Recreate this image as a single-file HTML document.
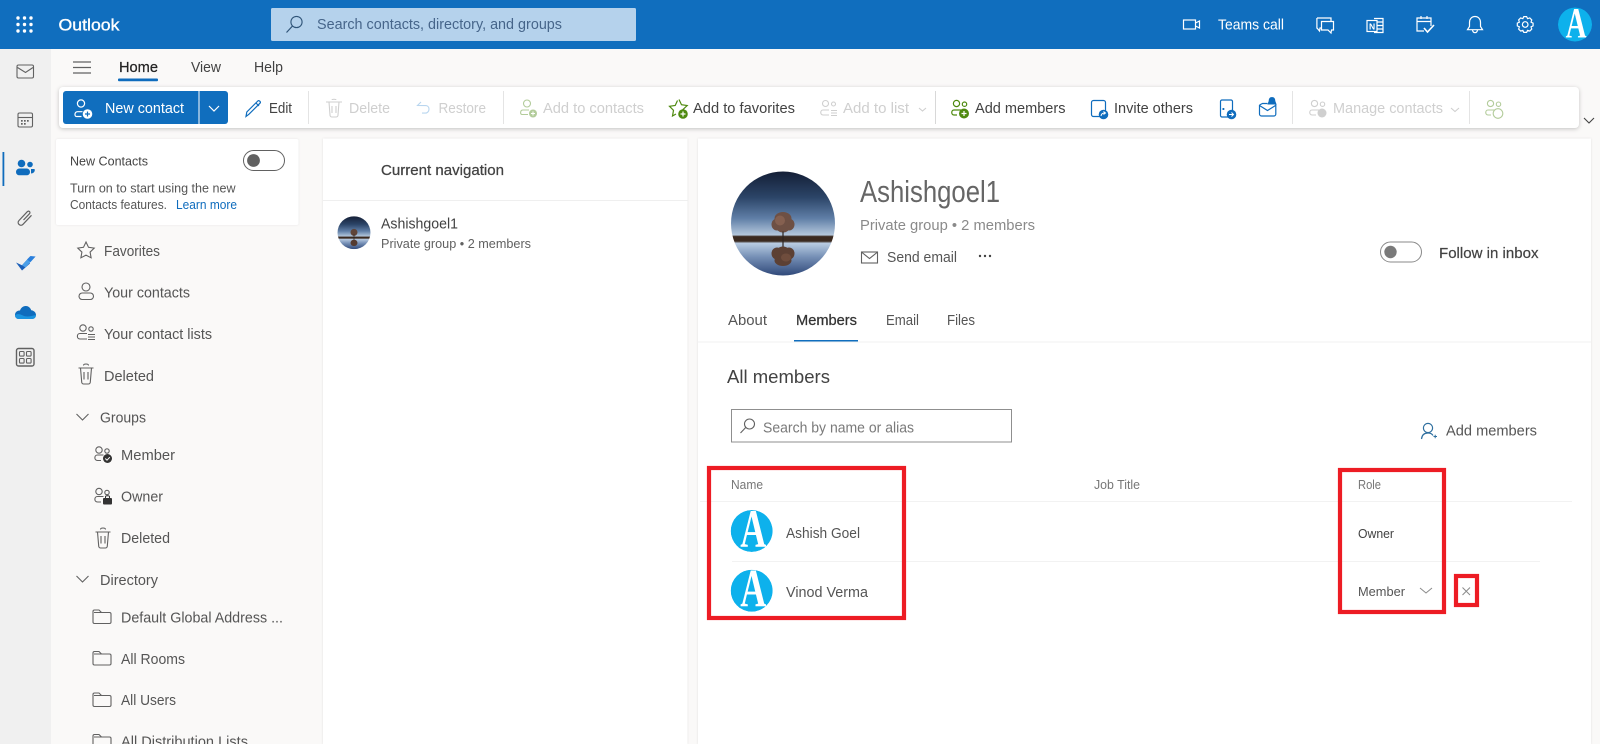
<!DOCTYPE html>
<html lang="en"><head><meta charset="utf-8"><title>Outlook</title>
<style>
html,body{margin:0;padding:0;width:1600px;height:744px;overflow:hidden;background:#faf9f8}
svg{display:block;filter:blur(.3px)}
text{font-family:"Liberation Sans",sans-serif;font-size:14px;fill:#424242}
.w{fill:#fff}.d{fill:#cfcfcf}.g{fill:#616161}.s{font-size:12.5px}.b{font-weight:bold}
.l{fill:none;stroke:#616161;stroke-width:1.1}
.wl{fill:none;stroke:#fff;stroke-width:1.2}
.bl{fill:none;stroke:#0f6cbd;stroke-width:1.2}
.gl{fill:none;stroke:#4f8a10;stroke-width:1.2}
.lg{fill:none;stroke:#b3cc9b;stroke-width:1.1}
.dl{fill:none;stroke:#cfcfcf;stroke-width:1.1}
</style></head><body>
<svg width="1600" height="744" viewBox="0 0 1600 744" xmlns="http://www.w3.org/2000/svg">
<defs>
<linearGradient id="sky" x1="0" y1="0" x2="0" y2="1">
<stop offset="0" stop-color="#141f36"/><stop offset=".25" stop-color="#2c4568"/><stop offset=".45" stop-color="#5f7ea6"/><stop offset=".61" stop-color="#b4c7dc"/><stop offset=".625" stop-color="#3b2a20"/><stop offset=".67" stop-color="#3b2a20"/><stop offset=".69" stop-color="#b9cce2"/><stop offset=".82" stop-color="#7690b6"/><stop offset="1" stop-color="#30497a"/>
</linearGradient>
<clipPath id="c52"><circle cx="0" cy="0" r="52"/></clipPath>
<clipPath id="c21"><circle cx="0" cy="0" r="21"/></clipPath>
</defs>

<!-- backgrounds -->
<rect width="1600" height="744" fill="#faf9f8"/>
<rect y="49" width="51" height="695" fill="#f0f0f0"/>
<rect width="1600" height="49" fill="#106ebe"/>

<!-- header -->
<g fill="#fff"><circle cx="18" cy="18" r="1.7"/><circle cx="24.5" cy="18" r="1.7"/><circle cx="31" cy="18" r="1.7"/><circle cx="18" cy="24.5" r="1.7"/><circle cx="24.5" cy="24.5" r="1.7"/><circle cx="31" cy="24.5" r="1.7"/><circle cx="18" cy="31" r="1.7"/><circle cx="24.5" cy="31" r="1.7"/><circle cx="31" cy="31" r="1.7"/></g>
<text x="58.5" y="30.7" textLength="61" lengthAdjust="spacingAndGlyphs" class="w" style="font-size:17px;stroke:#fff;stroke-width:.35">Outlook</text>
<rect x="271" y="8" width="365" height="33" rx="1.5" fill="#b5d2ec"/>
<circle cx="296.5" cy="22" r="5.6" fill="none" stroke="#2f5478" stroke-width="1.1"/><path d="M292.5 26 286.5 32.5" fill="none" stroke="#2f5478" stroke-width="1.2"/>
<text x="317" y="29" textLength="245" lengthAdjust="spacingAndGlyphs" style="font-size:15px;fill:#46658a">Search contacts, directory, and groups</text>
<rect x="1183.500" y="20" width="12" height="9" class="wl"/><path d="M1195.500 23l4-2v7l-4-2" class="wl"/>
<text x="1218" y="29.300" textLength="66" lengthAdjust="spacingAndGlyphs" class="w" style="font-size:14.500px">Teams call</text>
<path d="M1317 18h14v3M1322 28h-2l-.5 3-2.500-3h-.1V18" class="wl"/><path d="M1321.500 21.500h12v8.500h-2l-.5 3-3-3h-6.500z" class="wl"/>
<path d="M1374 18.500h9v14h-9M1377 22h6M1377 25.500h6M1377 29h6" class="wl"/><rect x="1367" y="20.500" width="10" height="11" class="wl"/><text x="1369" y="29.500" class="w b" style="font-size:8.500px">N</text>
<path d="M1431 26v-8h-14v13h7M1417 21.500h14M1421 16v3M1427 16v3" class="wl"/><path d="M1424 28l3.500 4 6.500-7" fill="none" stroke="#fff" stroke-width="1.600"/>
<path d="M1475 16.500c-3.500 0-5.500 2.600-5.500 6v4l-2 3.200h15l-2-3.200v-4c0-3.400-2-6-5.500-6zM1472.500 30c.3 1.800 1.200 2.700 2.500 2.700s2.200-.9 2.500-2.700" class="wl"/>
<g transform="translate(1525.200 24.500)"><polygon class="wl" points="7.880,-1.390 7.880,1.390 5.840,2.360 6.550,4.590 4.590,6.550 2.360,5.840 1.390,7.880 -1.390,7.880 -2.360,5.840 -4.590,6.550 -6.550,4.590 -5.840,2.360 -7.880,1.390 -7.880,-1.390 -5.840,-2.360 -6.550,-4.590 -4.590,-6.550 -2.360,-5.840 -1.390,-7.880 1.390,-7.880 2.360,-5.840 4.590,-6.550 6.550,-4.590 5.840,-2.360"/><circle r="2.800" class="wl"/></g>
<g transform="translate(1575 24.500) scale(.81)" clip-path="url(#c21)"><circle r="21" fill="#0db1ec"/><text x="-11.500" y="16" textLength="26" lengthAdjust="spacingAndGlyphs" class="w b" style="font-family:'Liberation Serif',serif;font-size:54px">A</text><rect x="-21" y="16" width="42" height="1.500" fill="#0db1ec"/></g>

<!-- rail -->
<rect x="17" y="65" width="16.500" height="13" rx="1.500" class="l"/><path d="M17.500 67.500l8 5 7.500-5" class="l"/>
<rect x="18" y="113" width="14.500" height="14" rx="1.500" class="l"/><path d="M18 117.500h14.500" class="l"/><g fill="#616161"><rect x="21" y="120" width="1.700" height="1.700"/><rect x="24" y="120" width="1.700" height="1.700"/><rect x="27" y="120" width="1.700" height="1.700"/><rect x="21" y="123" width="1.700" height="1.700"/><rect x="24" y="123" width="1.700" height="1.700"/></g>
<rect x="2.500" y="152" width="1.800" height="34" fill="#0f6cbd"/>
<g fill="#0f6cbd"><circle cx="21.500" cy="163.500" r="3.800"/><circle cx="30" cy="164.500" r="2.800"/><rect x="16" y="168.500" width="14" height="6.800" rx="3.300"/><path d="M31 169h3c.6 0 .8.400.8 1 0 2-1.600 3.500-3.800 3.500z"/></g>
<path d="M23.500 220l6-6.300c1.400-1.500-.7-3.500-2.200-2l-8.300 8.800c-2.600 2.800 1.400 6.500 4 3.800l8.500-9" class="l" style="stroke-width:1.200"/>
<path d="M16 262.500l6 2.800 5-5.500 3 3.700-8 7z" fill="#1b5fb8"/><path d="M22 265.300l8-8.800 5.500 0-10 11z" fill="#4b9fe8"/><path d="M27 259.500l3.500-3.500 5 .5-5 5.500z" fill="#2a7fdc"/>
<path d="M15 315c0-3 2.500-4.800 5-4.500 1-3 3.500-4.800 6-4.500 2.800.2 4.500 2 5.200 4.200 2.200.2 4.800 1.800 4.800 4.800 0 2.500-2 4-4 4H19c-2.500 0-4-1.500-4-4z" fill="#0f6cbd"/><path d="M15 315c3-1.500 5-1 8 .5 4 2 8 .5 13-.5 0 2.500-2 4-4 4H19c-2.500 0-4-1.500-4-4z" fill="#1b94e0"/>
<rect x="16.500" y="348.500" width="17.500" height="17.500" rx="2" fill="none" stroke="#616161" stroke-width="1.400"/><g><rect x="19.500" y="351.500" width="4.600" height="4.600" rx="1" class="l"/><rect x="26.500" y="351.500" width="4.600" height="4.600" rx="1" class="l"/><rect x="19.500" y="358.500" width="4.600" height="4.600" rx="1" class="l"/><rect x="26.500" y="358.500" width="4.600" height="4.600" rx="1" class="l"/></g>

<!-- tabs -->
<path d="M73 62h18M73 67.500h18M73 73h18" class="l" style="stroke-width:1.300"/>
<text x="119" y="72" textLength="39" lengthAdjust="spacingAndGlyphs" style="font-size:14.500px;stroke:#242424;stroke-width:.25;fill:#242424">Home</text>
<rect x="118" y="78.500" width="40" height="2.800" rx="1" fill="#0f6cbd"/>
<text x="191" y="72" textLength="30" lengthAdjust="spacingAndGlyphs" style="font-size:14.500px">View</text>
<text x="254" y="72" textLength="29" lengthAdjust="spacingAndGlyphs" style="font-size:14.500px">Help</text>

<!-- ribbon -->
<rect x="59" y="87" width="1520" height="41" rx="4" fill="#fff" style="filter:drop-shadow(0 1px 2px rgba(0,0,0,.22))"/>
<rect x="63" y="91" width="165" height="33" rx="3" fill="#106ebe"/>
<rect x="198.500" y="91" width="1" height="33" fill="#fff"/>
<circle cx="81" cy="103.500" r="3.600" class="wl"/><path d="M76.500 116.500c-2.200 0-2.200-4.500 1-4.800h5M76.500 116.500h5" class="wl"/><circle cx="87.500" cy="114" r="4.800" fill="#fff"/><path d="M85 114h5M87.500 111.500v5" stroke="#106ebe" stroke-width="1.200"/>
<text x="105" y="113" textLength="79" lengthAdjust="spacingAndGlyphs" class="w" style="font-size:14.500px">New contact</text>
<path d="M209 106l5 5 5-5" class="wl"/>
<path d="M246 116.500l.8-4.500 11-11c1.200-1.200 3.400 1 2.200 2.200l-11 11z" class="bl"/><path d="M256 103l3 3" class="bl"/>
<text x="269" y="113" textLength="23" lengthAdjust="spacingAndGlyphs" style="font-size:14.500px">Edit</text>
<rect x="308" y="91" width="1" height="33" fill="#e4e4e4"/>
<path d="M326 102h16M329 102l1 13c0 1 .7 2 2 2h4c1.300 0 2-1 2-2l1-13M332 100c0-1 4-1 4 0M332 106v7M336 106v7" class="dl"/>
<text x="349" y="113" textLength="41" lengthAdjust="spacingAndGlyphs" class="d" style="font-size:14.500px">Delete</text>
<path d="M421 102l-3.500 3.500 8 .1c2 0 3.500 1.400 3.500 3.500s-1.500 4-3.500 4H422" fill="none" stroke="#b9d6ef" stroke-width="1.100"/>
<text x="438.500" y="113" textLength="47.500" lengthAdjust="spacingAndGlyphs" class="d" style="font-size:14.500px">Restore</text>
<rect x="503" y="91" width="1" height="33" fill="#e4e4e4"/>
<g transform="translate(520 100)"><circle cx="7" cy="3.500" r="3.500" class="lg"/><path d="M2 14.500c-2 0-2-4.500 1-4.500h6M2 14.500h6" class="lg"/><circle cx="13" cy="13.500" r="4" fill="#b3cc9b"/><path d="M11 13.500h4M13 11.500v4" stroke="#fff"/></g>
<text x="543" y="113" textLength="101" lengthAdjust="spacingAndGlyphs" class="d" style="font-size:14.500px">Add to contacts</text>
<path d="M679 99.500l2.500 5.200 5.700.8-4.200 4 .5 3.500M676 114l-3.500 2 1-5.700-4-4 5.700-.8 2.300-5" class="gl"/><circle cx="683" cy="114" r="4.800" fill="#4f8a10"/><path d="M680.500 114h5M683 111.500v5" stroke="#fff" stroke-width="1.200"/>
<text x="693" y="113" textLength="102" lengthAdjust="spacingAndGlyphs" style="font-size:14.500px">Add to favorites</text>
<g transform="translate(820 100)"><circle cx="5.500" cy="3.500" r="3" class="dl"/><circle cx="13.500" cy="4" r="2" class="dl"/><path d="M9 15H3c-3 0-3-5 0-5h6M11 10.500h6M11 13h6M11 15.500h6" class="dl"/></g>
<text x="843" y="113" textLength="66" lengthAdjust="spacingAndGlyphs" class="d" style="font-size:14.500px">Add to list</text>
<path d="M919 108l3.500 3 3.500-3" class="dl"/>
<rect x="935" y="91" width="1" height="33" fill="#d8d8d8"/>
<g transform="translate(951 100)"><circle cx="5.500" cy="3.500" r="3.100" class="gl"/><circle cx="13.500" cy="4.200" r="2.200" class="gl"/><path d="M6 15H3c-3 0-3-5 0-5h7" class="gl"/><circle cx="13" cy="13.500" r="5" fill="#4f8a10"/><path d="M10.500 13.500h5M13 11v5" stroke="#fff" stroke-width="1.200"/></g>
<text x="975" y="113" textLength="90.500" lengthAdjust="spacingAndGlyphs" style="font-size:14.500px">Add members</text>
<rect x="1091.500" y="100.500" width="14" height="16" rx="2" class="bl"/><circle cx="1103.500" cy="114.500" r="4.800" fill="#0f6cbd"/><path d="M1101 116c.3-2 1.500-3 3.500-3M1103.500 111.500l2 1.500-2 1.500" fill="none" stroke="#fff"/>
<text x="1114" y="113" textLength="79" lengthAdjust="spacingAndGlyphs" style="font-size:14.500px">Invite others</text>
<rect x="1220.500" y="100" width="12" height="17" rx="1.500" class="bl"/><rect x="1222.500" y="108" width="1.800" height="2" fill="#0f6cbd"/><circle cx="1231.500" cy="114.500" r="4.800" fill="#0f6cbd"/><path d="M1229 114.500h4.500M1231.500 112.500l2 2-2 2" fill="none" stroke="#fff"/>
<path d="M1259.500 105v9c0 1 .8 2 2 2h12.500c1 0 1.800-1 1.800-2v-10" class="bl"/><path d="M1259.500 105l3-1.500h5M1259.500 105.500l8 5 8-5" class="bl"/><path d="M1272 97c-2.500 0-3.300 2-3.300 4l-1.300 3.500h9.200l-1.300-3.500c0-2-.8-4-3.300-4z" fill="#0f6cbd"/>
<rect x="1292" y="91" width="1" height="33" fill="#e4e4e4"/>
<g transform="translate(1309 100)"><circle cx="5.500" cy="3.500" r="3.100" class="dl"/><circle cx="13.500" cy="4.200" r="2.200" class="dl"/><path d="M7 15H3c-3 0-3-5 0-5h7" class="dl"/><circle cx="13" cy="13" r="4.500" fill="#cfcfcf"/></g>
<text x="1333" y="113" textLength="110" lengthAdjust="spacingAndGlyphs" class="d" style="font-size:14.500px">Manage contacts</text>
<path d="M1451 108l4 3.500 4-3.500" class="dl"/>
<rect x="1469" y="91" width="1" height="33" fill="#e4e4e4"/>
<g transform="translate(1485 100)"><circle cx="5.500" cy="3.500" r="3.100" class="lg"/><circle cx="13.500" cy="4.200" r="2.200" class="lg"/><path d="M6 15H3c-3 0-3-5 0-5h7" class="lg"/><circle cx="13" cy="13.500" r="4.800" class="lg"/></g>
<path d="M1584 118l5 5 5-5" fill="none" stroke="#424242" stroke-width="1.100"/>

<!-- new contacts card -->
<rect x="56" y="139" width="242.500" height="86" rx="2" fill="#fff" style="filter:drop-shadow(0 0 1px rgba(0,0,0,.08))"/>
<text x="70" y="165.500" textLength="78" lengthAdjust="spacingAndGlyphs" class="s" style="fill:#444">New Contacts</text>
<rect x="243.500" y="150.500" width="41" height="20" rx="10" fill="#fff" stroke="#616161" stroke-width="1"/><circle cx="253.500" cy="160.500" r="6.400" fill="#616161"/>
<text x="70" y="192.700" textLength="165.500" lengthAdjust="spacingAndGlyphs" class="s" style="fill:#555">Turn on to start using the new</text>
<text x="70" y="209" textLength="97" lengthAdjust="spacingAndGlyphs" class="s" style="fill:#555">Contacts features.</text>
<text x="176" y="209" textLength="61" lengthAdjust="spacingAndGlyphs" class="s" style="fill:#0f6cbd">Learn more</text>

<!-- sidebar -->
<path d="M86 242l2.500 5.300 5.700.8-4.100 4 1 5.700-5.100-2.700-5.100 2.700 1-5.700-4.100-4 5.700-.8z" class="l"/>
<text x="104" y="256" textLength="56" lengthAdjust="spacingAndGlyphs" style="font-size:14.500px;fill:#555">Favorites</text>
<circle cx="86" cy="287" r="4" class="l"/><rect x="79" y="293" width="14.500" height="6.500" rx="3.200" class="l"/>
<text x="104" y="297.700" textLength="86" lengthAdjust="spacingAndGlyphs" style="font-size:14.500px;fill:#555">Your contacts</text>
<circle cx="83" cy="328" r="3.200" class="l"/><circle cx="91" cy="329" r="2.200" class="l"/><path d="M87 339H80c-3.500 0-3.500-5.500 0-5.500h7M88 334.500h7M88 337h7M88 339.500h7" class="l"/>
<text x="104" y="339" textLength="108" lengthAdjust="spacingAndGlyphs" style="font-size:14.500px;fill:#555">Your contact lists</text>
<path d="M78.500 368h15M80.500 368l1.200 14c0 1 .8 2 2 2h4.600c1.200 0 2-1 2-2l1.200-14M83.500 365.500c0-2 5-2 5 0M84 372v7.500M88 372v7.500" class="l"/>
<text x="104" y="381" textLength="50" lengthAdjust="spacingAndGlyphs" style="font-size:14.500px;fill:#555">Deleted</text>
<path d="M76.500 414l6 6 6-6" class="l"/>
<text x="100" y="422.500" textLength="46" lengthAdjust="spacingAndGlyphs" style="font-size:14.500px;fill:#555">Groups</text>
<circle cx="99" cy="450" r="3.200" class="l"/><circle cx="107" cy="451" r="2.200" class="l"/><path d="M101 460.500h-3.500c-3.500 0-3.500-5.500 0-5.500h6" class="l"/><circle cx="107.500" cy="458.500" r="4.500" fill="#333"/><path d="M105.300 458.500l1.700 1.700 2.800-3" fill="none" stroke="#fff" stroke-width="1"/>
<text x="121" y="460" textLength="54" lengthAdjust="spacingAndGlyphs" style="font-size:14.500px;fill:#555">Member</text>
<circle cx="99" cy="491.500" r="3.200" class="l"/><circle cx="107" cy="492.500" r="2.200" class="l"/><path d="M101 502h-3.500c-3.500 0-3.500-5.500 0-5.500h6" class="l"/><rect x="103" y="498" width="9" height="6.500" rx="1" fill="#333"/><path d="M105.500 498v-1.500c0-1 4-1 4 0v1.500" fill="none" stroke="#333"/>
<text x="121" y="501.700" textLength="42" lengthAdjust="spacingAndGlyphs" style="font-size:14.500px;fill:#555">Owner</text>
<path d="M95.500 532h15M97.500 532l1.200 14c0 1 .8 2 2 2h4.600c1.200 0 2-1 2-2l1.200-14M100.500 529.500c0-2 5-2 5 0M101 536v7.500M105 536v7.500" class="l"/>
<text x="121" y="543" textLength="49" lengthAdjust="spacingAndGlyphs" style="font-size:14.500px;fill:#555">Deleted</text>
<path d="M76.500 576l6 6 6-6" class="l"/>
<text x="100" y="585" textLength="58" lengthAdjust="spacingAndGlyphs" style="font-size:14.500px;fill:#555">Directory</text>
<path d="M94.500 623.500h15c1 0 1.500-.5 1.500-1.500v-8c0-1-.5-1.500-1.500-1.500h-8l-2.500-2.500h-4.500c-1 0-1.500.5-1.500 1.500V622c0 1 .5 1.500 1.500 1.500zM94 612.500h7.500" class="l"/>
<text x="121" y="622.700" textLength="162" lengthAdjust="spacingAndGlyphs" style="font-size:14.500px;fill:#555">Default Global Address ...</text>
<path d="M94.500 665h15c1 0 1.500-.5 1.500-1.500v-8c0-1-.5-1.500-1.500-1.500h-8l-2.500-2.500h-4.500c-1 0-1.500.5-1.500 1.500v10.500c0 1 .5 1.500 1.500 1.500zM94 654h7.500" class="l"/>
<text x="121" y="664" textLength="64" lengthAdjust="spacingAndGlyphs" style="font-size:14.500px;fill:#555">All Rooms</text>
<path d="M94.500 706.500h15c1 0 1.500-.5 1.500-1.500v-8c0-1-.5-1.500-1.500-1.500h-8l-2.500-2.500h-4.500c-1 0-1.500.5-1.500 1.500V705c0 1 .5 1.500 1.500 1.500zM94 695.500h7.500" class="l"/>
<text x="121" y="705" textLength="55" lengthAdjust="spacingAndGlyphs" style="font-size:14.500px;fill:#555">All Users</text>
<path d="M94.500 748h15c1 0 1.500-.5 1.500-1.500v-8c0-1-.5-1.500-1.500-1.500h-8l-2.500-2.500h-4.500c-1 0-1.500.5-1.500 1.500v10.500c0 1 .5 1.500 1.500 1.500zM94 737h7.500" class="l"/>
<text x="121" y="746.500" textLength="127" lengthAdjust="spacingAndGlyphs" style="font-size:14.500px;fill:#555">All Distribution Lists</text>

<!-- middle panel -->
<rect x="323" y="138.500" width="364.500" height="606" fill="#fff" style="filter:drop-shadow(0 0 1px rgba(0,0,0,.1))"/>
<text x="381" y="175" textLength="123" lengthAdjust="spacingAndGlyphs" style="font-size:14.500px;stroke:#424242;stroke-width:.25">Current navigation</text>
<rect x="323" y="200" width="365" height="1" fill="#efefef"/>
<g transform="translate(354 232.700) scale(.317)" clip-path="url(#c52)"><rect x="-52" y="-52" width="104" height="104" fill="url(#sky)"/><ellipse cx="0" cy="-1" rx="11" ry="11" fill="#5f4438"/><rect x="-1" y="5" width="2" height="30" fill="#2d2420"/><ellipse cx="0" cy="32" rx="11" ry="10" fill="#543a2f"/></g>
<text x="381" y="228.700" textLength="77" lengthAdjust="spacingAndGlyphs" style="font-size:14.500px">Ashishgoel1</text>
<text x="381" y="248" textLength="150" lengthAdjust="spacingAndGlyphs" class="s" style="fill:#616161">Private group  •  2 members</text>

<!-- right panel -->
<rect x="698" y="138.500" width="893" height="606" fill="#fff" style="filter:drop-shadow(0 0 1px rgba(0,0,0,.1))"/>
<g transform="translate(783 223.500)" clip-path="url(#c52)"><rect x="-52" y="-52" width="104" height="104" fill="url(#sky)"/>
<g fill="#6e5044"><ellipse cx="0" cy="-5" rx="8.500" ry="6.500"/><ellipse cx="-6" cy="1" rx="5.500" ry="6"/><ellipse cx="6" cy="1" rx="5.500" ry="6"/><ellipse cx="0" cy="3" rx="7" ry="6"/></g><ellipse cx="-3" cy="-3" rx="5" ry="5" fill="#856050"/><rect x="-.6" y="8" width="1.200" height="26" fill="#2d2420"/>
<g fill="#5c4034"><ellipse cx="0" cy="37" rx="8.500" ry="5.500"/><ellipse cx="-6" cy="30" rx="5.500" ry="6"/><ellipse cx="6" cy="30" rx="5.500" ry="6"/><ellipse cx="0" cy="29" rx="7" ry="6"/></g><ellipse cx="3" cy="34" rx="5" ry="4" fill="#6f4d3d"/></g>
<text x="860" y="202" textLength="140" lengthAdjust="spacingAndGlyphs" style="font-size:31px;fill:#666">Ashishgoel1</text>
<text x="860" y="230" textLength="175" lengthAdjust="spacingAndGlyphs" style="font-size:14.500px;fill:#8a8a8a">Private group  •  2 members</text>
<rect x="861.500" y="252" width="16" height="11" class="l"/><path d="M862 252.500l7.500 6 7.500-6" class="l"/>
<text x="887" y="262" textLength="70" lengthAdjust="spacingAndGlyphs" style="font-size:14.500px;fill:#555">Send email</text>
<g fill="#424242"><circle cx="980" cy="256" r="1.200"/><circle cx="985" cy="256" r="1.200"/><circle cx="990" cy="256" r="1.200"/></g>
<rect x="1380.500" y="242" width="41" height="20" rx="10" fill="#fff" stroke="#8a8a8a" stroke-width="1"/><circle cx="1390.500" cy="252" r="6.200" fill="#7a7a7a"/>
<text x="1439" y="258" textLength="99.500" lengthAdjust="spacingAndGlyphs" style="font-size:14.500px;stroke:#424242;stroke-width:.2">Follow in inbox</text>

<text x="728" y="325" textLength="39" lengthAdjust="spacingAndGlyphs" style="font-size:14.500px;fill:#555">About</text>
<text x="796" y="325" textLength="61" lengthAdjust="spacingAndGlyphs" style="font-size:14.500px;fill:#333;stroke:#333;stroke-width:.25">Members</text>
<text x="886" y="325" textLength="33" lengthAdjust="spacingAndGlyphs" style="font-size:14.500px;fill:#555">Email</text>
<text x="947" y="325" textLength="28" lengthAdjust="spacingAndGlyphs" style="font-size:14.500px;fill:#555">Files</text>
<rect x="794" y="340" width="64" height="1.600" fill="#106ebe"/>
<rect x="697" y="341.500" width="894" height="1" fill="#f1f1f1"/>
<text x="727" y="383" textLength="103" lengthAdjust="spacingAndGlyphs" style="font-size:18px">All members</text>

<rect x="731.500" y="409.500" width="280" height="32.500" fill="#fff" stroke="#8f8f8f" stroke-width="1"/>
<circle cx="749.500" cy="424" r="5" class="l"/><path d="M745.700 427.500 740.500 433" class="l"/>
<text x="763" y="432.700" textLength="151" lengthAdjust="spacingAndGlyphs" style="font-size:14.500px;fill:#7a7a7a">Search by name or alias</text>

<circle cx="1428" cy="428" r="4.600" fill="none" stroke="#2f6f9f" stroke-width="1.200"/><path d="M1421.500 439c.5-4.500 3-6 6.500-6 2.500 0 4 .7 5 2.500" fill="none" stroke="#2f6f9f" stroke-width="1.200"/><path d="M1433.500 436.500h3.500M1435.200 434.800v3.500" stroke="#2f6f9f" stroke-width="1"/>
<text x="1446" y="435.700" textLength="91" lengthAdjust="spacingAndGlyphs" style="font-size:14.500px;fill:#555">Add members</text>

<rect x="700" y="501" width="872" height="1" fill="#f2f2f2"/>
<rect x="732" y="561" width="808" height="1" fill="#f2f2f2"/>
<text x="731" y="489" textLength="32" lengthAdjust="spacingAndGlyphs" class="s" style="fill:#777">Name</text>
<text x="1094" y="489" textLength="46" lengthAdjust="spacingAndGlyphs" class="s" style="fill:#777">Job Title</text>
<text x="1358" y="489" textLength="23" lengthAdjust="spacingAndGlyphs" class="s" style="fill:#777">Role</text>

<g transform="translate(751.700 531)" clip-path="url(#c21)"><circle r="21" fill="#0db1ec"/><text x="-11.500" y="16" textLength="26" lengthAdjust="spacingAndGlyphs" class="w b" style="font-family:'Liberation Serif',serif;font-size:54px">A</text><rect x="-21" y="16" width="42" height="1.500" fill="#0db1ec"/></g>
<text x="786" y="538" textLength="74" lengthAdjust="spacingAndGlyphs" style="font-size:14.500px;fill:#555">Ashish Goel</text>
<g transform="translate(751.700 590.700)" clip-path="url(#c21)"><circle r="21" fill="#0db1ec"/><text x="-11.500" y="16" textLength="26" lengthAdjust="spacingAndGlyphs" class="w b" style="font-family:'Liberation Serif',serif;font-size:54px">A</text><rect x="-21" y="16" width="42" height="1.500" fill="#0db1ec"/></g>
<text x="786" y="597" textLength="82" lengthAdjust="spacingAndGlyphs" style="font-size:14.500px;fill:#555">Vinod Verma</text>

<text x="1358" y="538" textLength="36" lengthAdjust="spacingAndGlyphs" class="s">Owner</text>
<text x="1358" y="596" textLength="47" lengthAdjust="spacingAndGlyphs" class="s" style="fill:#555">Member</text>
<path d="M1420 588l6 5 6-5" fill="none" stroke="#8a8a8a" stroke-width="1"/>
<path d="M1462.500 587.500l7.500 7.500M1470 587.500l-7.500 7.500" fill="none" stroke="#8a8a8a" stroke-width="1"/>

<!-- annotations -->
<g fill="none" stroke="#ed1c24" stroke-width="4.200">
<rect x="709" y="468" width="195" height="150"/>
<rect x="1340" y="470" width="104" height="142"/>
<rect x="1456" y="576" width="21" height="29"/>
</g>
</svg>
</body></html>
